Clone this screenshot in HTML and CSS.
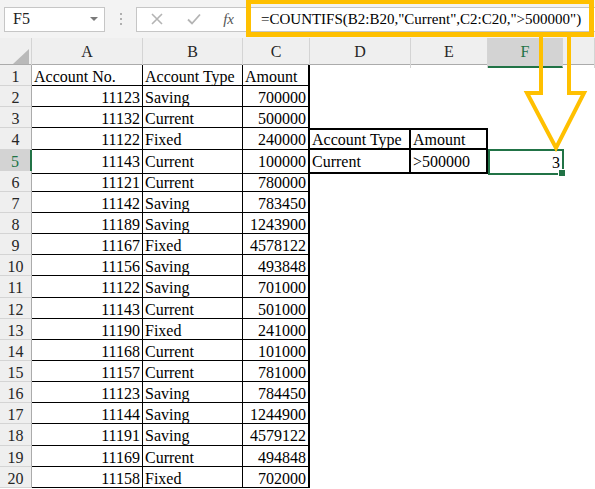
FILE: index.html
```html
<!DOCTYPE html>
<html lang="en">
<head>
  <meta charset="UTF-8" />
  <title>COUNTIFS</title>
  <link rel="stylesheet" href="styles.css">
</head>
<body>
  <div class="toolbar">
    <div class="namebox"><span>F5</span><span class="caret"></span></div>
    <div class="dots"><i></i><i></i><i></i></div>
    <div class="fbtns">
      <svg width="14" height="14" viewBox="0 0 14 14"><path d="M2 2L12 12M12 2L2 12" stroke="#b4b4b4" stroke-width="1.6" fill="none"/></svg>
      <svg width="16" height="14" viewBox="0 0 16 14"><path d="M2 7.5L6 11.5L14 2.5" stroke="#b4b4b4" stroke-width="1.8" fill="none"/></svg>
      <span class="fx">fx</span>
    </div>
    <div class="formula">=COUNTIFS(B2:B20,"Current",C2:C20,"&gt;500000")</div>
  </div>

  <div class="sheet">
    <div class="hdr">
      <div class="corner"><svg width="16" height="15" viewBox="0 0 16 15"><path d="M16 0L16 15L0 15Z" fill="#b9b9b9"/></svg></div>
      <div class="ch">A</div>
      <div class="ch">B</div>
      <div class="ch">C</div>
      <div class="ch">D</div>
      <div class="ch">E</div>
      <div class="ch on">F</div>
      <div class="ch"></div>
    </div>

    <div class="row"><div class="rh">1</div><div class="c">Account No.</div><div class="c">Account Type</div><div class="c last">Amount</div></div>
    <div class="row"><div class="rh">2</div><div class="c num">11123</div><div class="c">Saving</div><div class="c num last">700000</div></div>
    <div class="row"><div class="rh">3</div><div class="c num">11132</div><div class="c">Current</div><div class="c num last">500000</div></div>
    <div class="row"><div class="rh">4</div><div class="c num">11122</div><div class="c">Fixed</div><div class="c num last">240000</div><div class="box top">Account Type</div><div class="box top">Amount</div></div>
    <div class="row"><div class="rh on">5</div><div class="c num">11143</div><div class="c">Current</div><div class="c num last">100000</div><div class="box">Current</div><div class="box">&gt;500000</div><div class="sel">3</div></div>
    <div class="row"><div class="rh">6</div><div class="c num">11121</div><div class="c">Current</div><div class="c num last">780000</div></div>
    <div class="row"><div class="rh">7</div><div class="c num">11142</div><div class="c">Saving</div><div class="c num last">783450</div></div>
    <div class="row"><div class="rh">8</div><div class="c num">11189</div><div class="c">Saving</div><div class="c num last">1243900</div></div>
    <div class="row"><div class="rh">9</div><div class="c num">11167</div><div class="c">Fixed</div><div class="c num last">4578122</div></div>
    <div class="row"><div class="rh">10</div><div class="c num">11156</div><div class="c">Saving</div><div class="c num last">493848</div></div>
    <div class="row"><div class="rh">11</div><div class="c num">11122</div><div class="c">Saving</div><div class="c num last">701000</div></div>
    <div class="row"><div class="rh">12</div><div class="c num">11143</div><div class="c">Current</div><div class="c num last">501000</div></div>
    <div class="row"><div class="rh">13</div><div class="c num">11190</div><div class="c">Fixed</div><div class="c num last">241000</div></div>
    <div class="row"><div class="rh">14</div><div class="c num">11168</div><div class="c">Current</div><div class="c num last">101000</div></div>
    <div class="row"><div class="rh">15</div><div class="c num">11157</div><div class="c">Current</div><div class="c num last">781000</div></div>
    <div class="row"><div class="rh">16</div><div class="c num">11123</div><div class="c">Saving</div><div class="c num last">784450</div></div>
    <div class="row"><div class="rh">17</div><div class="c num">11144</div><div class="c">Saving</div><div class="c num last">1244900</div></div>
    <div class="row"><div class="rh">18</div><div class="c num">11191</div><div class="c">Saving</div><div class="c num last">4579122</div></div>
    <div class="row"><div class="rh">19</div><div class="c num">11169</div><div class="c">Current</div><div class="c num last">494848</div></div>
    <div class="row"><div class="rh">20</div><div class="c num">11158</div><div class="c">Fixed</div><div class="c num last">702000</div></div>
  </div>

  <!-- yellow callout drawn over the formula bar and column F -->
  <svg class="callout" width="595" height="489" viewBox="0 0 595 489">
    <rect x="248.5" y="1.5" width="343" height="33" fill="none" stroke="#ffc000" stroke-width="5"/>
    <path d="M541 36V93H527L556 148L584 93H569V36" fill="none" stroke="#ffc000" stroke-width="4" stroke-linejoin="miter"/>
  </svg>
</body>
</html>
```

FILE: styles.css
```css
* {
  box-sizing: border-box;
}
body {
  margin: 0;
  width: 595px;
  height: 489px;
  overflow: hidden;
  position: relative;
  background: #fff;
  color: #000;
  font-family: "Liberation Serif", "Times New Roman", serif;
  font-size: 16px;
}

/* formula bar */
.toolbar {
  height: 38px;
  background: #f3f3f3;
  display: flex;
  align-items: center;
  padding-left: 4px;
}
.namebox {
  width: 101px;
  height: 25px;
  background: #fff;
  border: 1px solid #c6c6c6;
  display: flex;
  align-items: center;
  justify-content: space-between;
  padding: 0 6px 0 8px;
  color: #222;
}
.caret {
  width: 0;
  height: 0;
  border-left: 4px solid transparent;
  border-right: 4px solid transparent;
  border-top: 4px solid #7a7a7a;
}
.dots {
  width: 31px;
  display: flex;
  flex-direction: column;
  align-items: center;
  gap: 3px;
}
.dots i {
  width: 2px;
  height: 2px;
  background: #b0b0b0;
}
.fbtns {
  width: 110px;
  height: 25px;
  background: #fff;
  border: 1px solid #c6c6c6;
  border-right: none;
  display: flex;
  align-items: center;
  justify-content: space-between;
  padding: 0 12px 0 13px;
}
.fx {
  font-style: italic;
  color: #555;
  font-size: 15px;
}
.formula {
  flex: 1;
  height: 25px;
  background: #fff;
  border: 1px solid #c6c6c6;
  border-right: none;
  padding-left: 14px;
  line-height: 23px;
  font-size: 15px;
  white-space: nowrap;
}

/* sheet */
.hdr, .row {
  display: grid;
  grid-template-columns: 32px 111px 100px 67px 101px 77px 75px 32px;
}
.hdr {
  height: 27px;
  background: #efefef;
  border-bottom: 1px solid #ababab;
}
.corner {
  display: flex;
  align-items: flex-end;
  justify-content: flex-end;
  padding: 0 2px 4px 0;
  border-right: 1px solid #d4d4d4;
}
.ch {
  border-right: 1px solid #d4d4d4;
  text-align: center;
  line-height: 28px;
  color: #262626;
}
.ch.on {
  background: #d3d3d3;
  color: #217346;
  border-bottom: 2px solid #217346;
}
.row {
  height: 21.15px;
  line-height: 20px;
}
.row > div {
  padding: 2px 2px 0;
  white-space: nowrap;
  overflow: hidden;
}
.rh {
  background: #efefef;
  border-right: 1px solid #ababab;
  border-bottom: 1px solid #d4d4d4;
  text-align: center;
  color: #262626;
}
.rh.on {
  background: #d3d3d3;
  color: #217346;
  border-right: 2px solid #217346;
}
.c {
  border-right: 1px solid #000;
  border-bottom: 1px solid #000;
}
.c.last {
  border-right: 2px solid #000;
}
.num {
  text-align: right;
}
.box {
  border-right: 2px solid #000;
  border-bottom: 2px solid #000;
}
.box.top {
  border-top: 2px solid #000;
  padding-top: 0;
}
.row > .sel {
  position: relative;
  overflow: visible;
  margin: -1px -1px -1px 0;
  border: 2px solid #217346;
  text-align: right;
  padding-top: 2px;
}
.sel::after {
  content: "";
  position: absolute;
  right: -4px;
  bottom: -4px;
  width: 6px;
  height: 6px;
  background: #217346;
  border: 1px solid #fff;
}

.callout {
  position: absolute;
  left: 0;
  top: 0;
  pointer-events: none;
}
```
